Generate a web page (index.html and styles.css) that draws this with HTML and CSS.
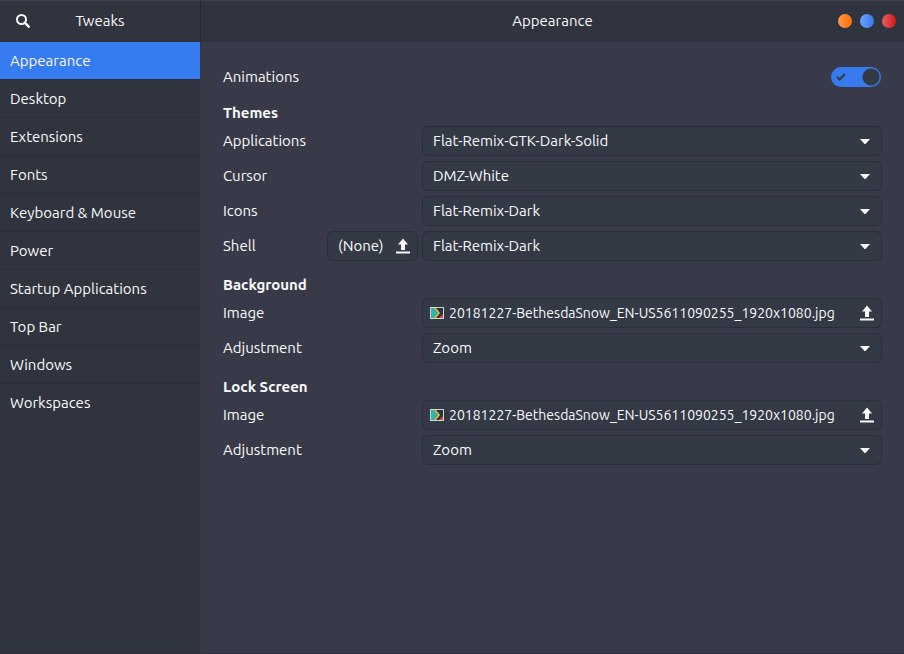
FILE: index.html
```html
<!DOCTYPE html>
<html lang="en">
<head>
<meta charset="utf-8">
<title>Tweaks</title>
<link rel="stylesheet" href="styles.css">
</head>
<body>
<svg class="defs" aria-hidden="true">
  <symbol id="upload" viewBox="0 0 14 16"><path fill="currentColor" d="M7 0.5 12 6.5H9V12H5V6.5H2ZM0 13.5H14V15.5H0Z"/></symbol>
  <symbol id="arrow" viewBox="0 0 10 5"><path fill="currentColor" d="M0 0H10L5.5 5H4.5Z"/></symbol>
  <symbol id="picture" viewBox="0 0 14 12">
    <path fill="#d5d3d0" d="M0 0H14V12H0Z"/>
    <path fill="#263349" d="M1 1H13V11H1Z"/>
    <path fill="#2bb5b0" d="M1 1H4L8 6 4 11H1Z"/>
    <path fill="#f4c020" d="M4 1H6L10 6 6 11H4L8 6Z"/>
    <path fill="#e04b55" d="M13 7V11H9Z"/>
  </symbol>
</svg>
<div class="window">
  <aside class="sidebar">
    <header class="bar">
      <button class="search" aria-label="Search">
        <svg viewBox="0 0 14 14" width="14" height="14"><circle cx="5.500" cy="5.500" r="4.500" fill="none" stroke="currentColor" stroke-width="2"/><path d="M8.700 8.700 12.700 12.700" stroke="currentColor" stroke-width="2.400" stroke-linecap="round"/></svg>
      </button>
      <h1>Tweaks</h1>
    </header>
    <nav>
      <a href="#" class="active" aria-current="page">Appearance</a>
      <a href="#">Desktop</a>
      <a href="#">Extensions</a>
      <a href="#">Fonts</a>
      <a href="#">Keyboard &amp; Mouse</a>
      <a href="#">Power</a>
      <a href="#">Startup Applications</a>
      <a href="#">Top Bar</a>
      <a href="#">Windows</a>
      <a href="#">Workspaces</a>
    </nav>
  </aside>
  <main class="content">
    <header class="bar">
      <h2>Appearance</h2>
      <div class="controls">
        <button class="minimize" aria-label="Minimize"></button>
        <button class="maximize" aria-label="Maximize"></button>
        <button class="close" aria-label="Close"></button>
      </div>
    </header>
    <form class="settings">
      <div class="row switch-row">
        <label for="animations">Animations</label>
        <span class="switch">
          <input type="checkbox" role="switch" id="animations" checked>
          <svg viewBox="0 0 10 8" width="10" height="8" aria-hidden="true"><path d="M1 4 3.800 6.500 8.800 1" fill="none" stroke="currentColor" stroke-width="2"/></svg>
        </span>
      </div>
      <section>
        <h3>Themes</h3>
        <div class="row">
          <label for="applications">Applications</label>
          <span class="field"><select id="applications"><option>Flat-Remix-GTK-Dark-Solid</option></select><svg class="arrow"><use href="#arrow"/></svg></span>
        </div>
        <div class="row">
          <label for="cursor">Cursor</label>
          <span class="field"><select id="cursor"><option>DMZ-White</option></select><svg class="arrow"><use href="#arrow"/></svg></span>
        </div>
        <div class="row">
          <label for="icons">Icons</label>
          <span class="field"><select id="icons"><option>Flat-Remix-Dark</option></select><svg class="arrow"><use href="#arrow"/></svg></span>
        </div>
        <div class="row">
          <label for="shell">Shell</label>
          <button type="button" class="file pick">(None)<svg class="upload"><use href="#upload"/></svg></button>
          <span class="field"><select id="shell"><option>Flat-Remix-Dark</option></select><svg class="arrow"><use href="#arrow"/></svg></span>
        </div>
      </section>
      <section>
        <h3>Background</h3>
        <div class="row">
          <label for="bg-image">Image</label>
          <button type="button" class="file field" id="bg-image"><svg class="picture"><use href="#picture"/></svg><span class="name">20181227-BethesdaSnow_EN-US5611090255_1920x1080.jpg</span><svg class="upload"><use href="#upload"/></svg></button>
        </div>
        <div class="row">
          <label for="bg-adjust">Adjustment</label>
          <span class="field"><select id="bg-adjust"><option>Zoom</option></select><svg class="arrow"><use href="#arrow"/></svg></span>
        </div>
      </section>
      <section>
        <h3>Lock Screen</h3>
        <div class="row">
          <label for="lock-image">Image</label>
          <button type="button" class="file field" id="lock-image"><svg class="picture"><use href="#picture"/></svg><span class="name">20181227-BethesdaSnow_EN-US5611090255_1920x1080.jpg</span><svg class="upload"><use href="#upload"/></svg></button>
        </div>
        <div class="row">
          <label for="lock-adjust">Adjustment</label>
          <span class="field"><select id="lock-adjust"><option>Zoom</option></select><svg class="arrow"><use href="#arrow"/></svg></span>
        </div>
      </section>
    </form>
  </main>
</div>
</body>
</html>
```
FILE: styles.css
```css
* { box-sizing: border-box; }

body {
  margin: 0;
  background: #383a49;
  color: #fafafa;
  font: 15px/20px "Ubuntu", "Noto Sans", sans-serif;
}

button, select { font: inherit; color: inherit; }
h1, h2, h3 { margin: 0; font-size: inherit; }
.defs { display: none; }

.window {
  display: flex;
  min-height: 100vh;
  border-bottom: 1px solid #2e2e3a;
}

.bar {
  position: relative;
  display: flex;
  align-items: center;
  justify-content: center;
  height: 42px;
  background: #30343f;
  box-shadow: inset 0 1px #41444e;
}
.bar h1, .bar h2 { font-weight: 400; }

.sidebar {
  flex: 0 0 201px;
  background: #30343f;
  border-right: 1px solid #343744;
}
.sidebar .bar { box-shadow: inset 0 1px #41444e, 1px 0 #272a33; }

.search {
  position: absolute;
  left: 8px;
  display: flex;
  padding: 8px;
  border: 0;
  background: none;
}

nav a {
  display: block;
  padding: 9px 10px 8px;
  border-bottom: 1px solid #2b2e38;
  color: inherit;
  text-decoration: none;
}
nav a:last-child { border-bottom-color: transparent; }
nav .active { background: #367bf0; }

.content { flex: 1; min-width: 0; }

.controls {
  position: absolute;
  right: 8px;
  display: flex;
  gap: 8px;
}
.controls button {
  width: 14px;
  height: 14px;
  padding: 0;
  border: 0;
  border-radius: 50%;
}
.minimize { background: linear-gradient(to right, #ff9650, #ff7200); }
.maximize { background: linear-gradient(to right, #6ba2f8, #367bf0); }
.close { background: linear-gradient(to right, #e66064, #d41919); }

.settings { padding: 20px 22px; }
section { padding-top: 6px; }
h3 { padding: 3px 0; font-weight: 700; }

.row {
  display: flex;
  align-items: center;
  gap: 4px;
  height: 30px;
  margin-bottom: 5px;
}
.row label { flex: 1; }
.row .field { flex: 0 0 460px; }

.switch-row { margin-bottom: 2px; }
.switch { position: relative; display: flex; }
.switch input {
  appearance: none;
  width: 50px;
  height: 20px;
  margin: 0 1px 0 0;
  border-radius: 10px;
  background: #30343f;
}
.switch input:checked {
  background: radial-gradient(circle at 40px 10px, #333945 8px, #367bf0 9px);
}
.switch svg {
  position: absolute;
  left: 5px;
  top: 6px;
  color: #333945;
  pointer-events: none;
}

.field { position: relative; display: flex; }
select, .file {
  height: 30px;
  border: 1px solid #2b2e39;
  border-radius: 6px;
  background: #333945;
}
select {
  appearance: none;
  width: 100%;
  padding: 0 30px 0 10px;
}
.arrow {
  position: absolute;
  right: 12px;
  top: 13px;
  width: 10px;
  height: 5px;
  pointer-events: none;
}

.file {
  display: flex;
  align-items: center;
  justify-content: space-between;
  text-align: left;
}
.pick { flex: 0 0 91px; padding: 0 7px 0 10px; }
.file.field { padding: 0 7px; gap: 5px; }
.name { flex: 1; min-width: 0; overflow: hidden; font-size: 14px; white-space: nowrap; text-overflow: ellipsis; }
.upload { flex: none; width: 14px; height: 16px; }
.picture { flex: none; width: 14px; height: 12px; }
```
